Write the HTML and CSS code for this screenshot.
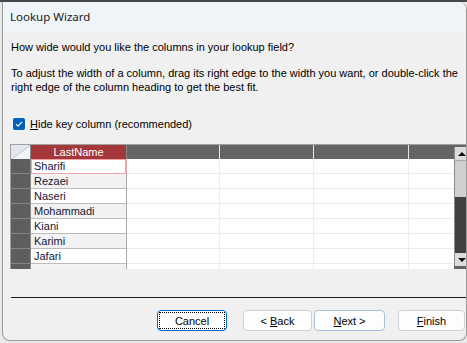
FILE: index.html
```html
<!DOCTYPE html>
<html lang="en">

<head>
  <meta charset="UTF-8" />
  <title>Lookup Wizard</title>
<link rel="stylesheet" href="styles.css">
</head>

<body>
  <div class="window">
    <div class="titlebar">Lookup Wizard</div>

    <div class="content">
      <p class="intro">How wide would you like the columns in your lookup field?</p>
      <p class="help">To adjust the width of a column, drag its right edge to the width you want, or double-click the<br>right edge of the column heading to get the best fit.</p>

      <label class="check">
        <span class="box">
          <svg width="12" height="12" viewBox="0 0 12 12"><polyline points="3,6.2 5,8.2 9,3.8" fill="none" stroke="#fff" stroke-width="1.2" /></svg>
        </span>
        <span><u>H</u>ide key column (recommended)</span>
      </label>

      <div class="sheet">
        <div class="cols">
          <div class="corner"></div>
          <div class="head name">LastName</div>
          <div class="head"></div>
          <div class="head"></div>
          <div class="head"></div>
          <div class="head last"></div>
        </div>
        <div class="scroll">
          <div class="arrow up"></div>
          <div class="thumb"></div>
          <div class="track"></div>
          <div class="arrow down"></div>
        </div>
      </div>

      <div class="rule"></div>

      <div class="buttons">
        <button class="btn cancel"><span class="focus">Cancel</span></button>
        <button class="btn back">&lt; <u>B</u>ack</button>
        <button class="btn next"><u>N</u>ext &gt;</button>
        <button class="btn finish"><u>F</u>inish</button>
      </div>
    </div>
  </div>

<script>
const names = ['Sharifi', 'Rezaei', 'Naseri', 'Mohammadi', 'Kiani', 'Karimi', 'Jafari', ''];
const cols = document.querySelector('.cols');

names.forEach((n, i) => {
  const row = [];
  row.push('<div class="sel"></div>');
  let cls = 'cell name';
  if (i === 0) cls += ' current';
  else if (i % 2 === 1) cls += ' alt';
  row.push('<div class="' + cls + '">' + n + '</div>');
  for (let c = 0; c < 4; c++) {
    row.push('<div class="cell' + (c === 3 ? ' last' : '') + '"></div>');
  }
  cols.insertAdjacentHTML('beforeend', row.join(''));
});
</script>
</body>

</html>
```

FILE: styles.css
```css
html {
  background: #e8e8e8;
}

body {
  margin: 0;
  border-top: 2px solid #474747;
  height: 341px;
  overflow: hidden;
  font-family: 'Liberation Sans', Arial, sans-serif;
  font-size: 11px;
  color: #000;
}

.window {
  margin-left: 2px;
  width: 463px;
  height: 338px;
  border: 1px solid #9a9a9a;
  border-top: none;
  border-radius: 0 8px 8px 8px;
  overflow: hidden;
  display: flex;
  flex-direction: column;
  background: #f0f0f0;
}

.titlebar {
  height: 30px;
  line-height: 30px;
  padding-left: 7px;
  background: #eff4f9;
  font-family: 'Noto Sans', 'Open Sans', sans-serif;
  font-size: 11.5px;
  color: #1a1a1a;
}

.content {
  flex: 1;
  display: flex;
  flex-direction: column;
}

.intro {
  margin: 9px 0 0 8px;
  line-height: 13px;
}

.help {
  margin: 12px 0 0 8px;
  line-height: 14px;
  white-space: nowrap;
}

.check {
  display: flex;
  align-items: center;
  gap: 5px;
  margin: 23px 0 0 10px;
  height: 13px;
}

.box {
  width: 12px;
  height: 12px;
  border-radius: 2px;
  background: #005fb8;
  display: flex;
}

.sheet {
  margin: 14px 0 0 7px;
  height: 124px;
  border-top: 1px solid #a0a0a0;
  border-left: 1px solid #a0a0a0;
  display: flex;
  overflow: hidden;
}

.cols {
  flex: 1;
  display: grid;
  grid-template-columns: 20px 96px 93px 94px 95px 1fr;
  grid-template-rows: 14px;
  grid-auto-rows: 15px;
  align-content: start;
  background: #fff;
}

.corner {
  background: linear-gradient(to bottom right, #e3e7ee 49%, #b9c2d4 50%, #f2f4f8 56%);
  border-right: 1px solid #8a8a8a;
}

.head {
  background: #656565;
  border-right: 1px solid #e8e8e8;
}

.head.name {
  background: #a4373a;
  color: #fff;
  text-align: center;
  line-height: 14px;
  border-right: 1px solid #8a8a8a;
}

.head.last {
  border-right: none;
}

.sel {
  background: #5e5e5e;
  border-bottom: 1px solid #858585;
  border-right: 1px solid #8a8a8a;
}

.cell {
  box-sizing: border-box;
  border-right: 1px solid #ececec;
  border-bottom: 1px solid #ececec;
}

.cell.last {
  border-right: none;
}

.cell.name {
  background: #fff;
  color: #15153a;
  line-height: 14px;
  padding-left: 3px;
  border-right: 1px solid #a8a8a8;
  border-bottom: 1px solid #bcbcbc;
}

.cell.alt {
  background: #f2f2f2;
}

.cell.current {
  border: 1px solid #f2a2a8;
  border-right-width: 2px;
  padding-left: 2px;
  line-height: 13px;
}

.scroll {
  width: 12px;
  display: flex;
  flex-direction: column;
  background: #656565;
  padding-top: 2px;
}

.arrow {
  height: 13px;
  background: #dcdcdc;
  border-left: 1px solid #8c8c8c;
  position: relative;
}

.arrow::after {
  content: '';
  position: absolute;
  left: 3px;
  border-left: 4px solid transparent;
  border-right: 4px solid transparent;
}

.arrow.up::after {
  top: 5px;
  border-bottom: 4px solid #111;
}

.arrow.down::after {
  top: 5px;
  border-top: 4px solid #111;
}

.thumb {
  height: 36px;
  background: #cfcfcf;
  border-left: 1px solid #8c8c8c;
  border-top: 1px solid #a8a8a8;
}

.track {
  flex: 1;
  background: #404040;
  border-left: 1px solid #8c8c8c;
}

.arrow.down {
  margin-bottom: 3px;
}

.rule {
  margin: 28px 0 0 8px;
  height: 1px;
  background: #1c1c1c;
}

.buttons {
  display: flex;
  margin-top: 12px;
  padding-left: 154px;
}

.btn {
  height: 21px;
  padding: 0;
  font-family: 'Liberation Sans', Arial, sans-serif;
  font-size: 11px;
  color: #000;
  background: #fdfdfd;
  border: 1px solid #d0d0d0;
  border-radius: 4px;
}

.cancel {
  width: 70px;
  border: 1px solid #0067c0;
  padding: 1px;
}

.focus {
  display: block;
  height: 100%;
  line-height: 17px;
  border: 1px dotted #000;
  box-sizing: border-box;
}

.back {
  width: 69px;
  margin-left: 16px;
}

.next {
  width: 71px;
  margin-left: 2px;
  border-color: #a9c0dc;
}

.finish {
  width: 67px;
  margin-left: 13px;
}
```
